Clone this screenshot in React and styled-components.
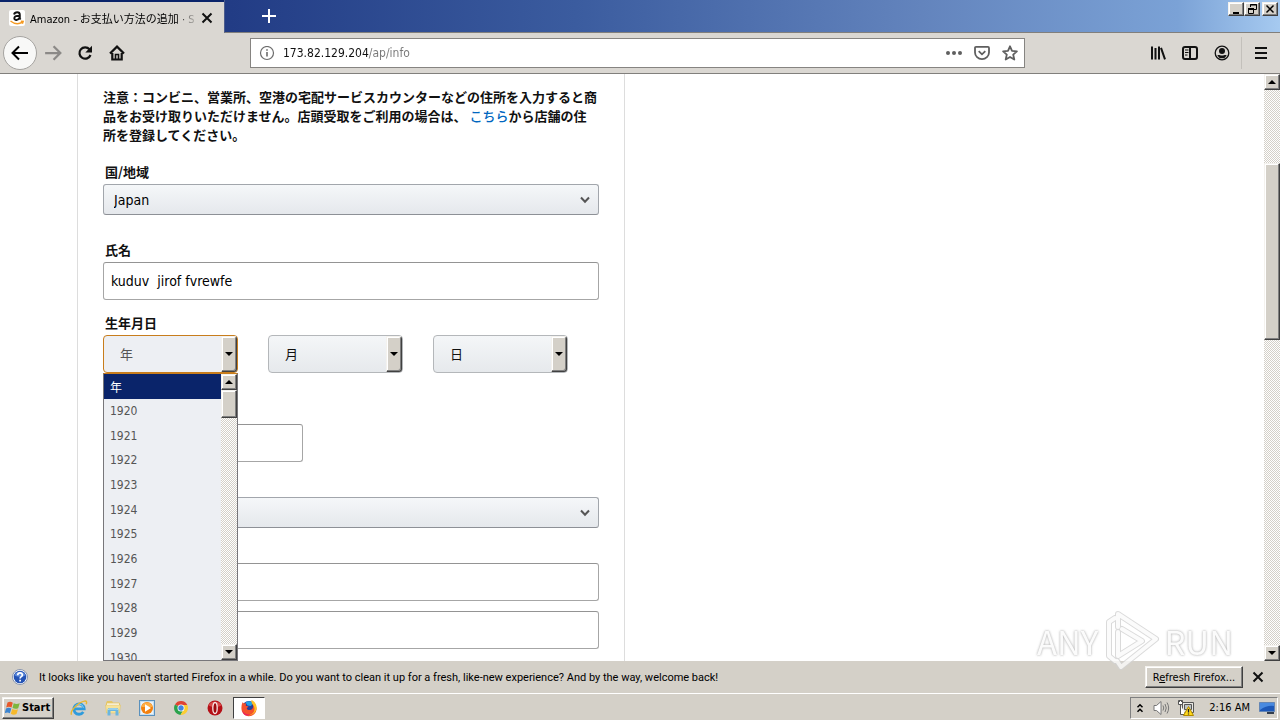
import React, { useState } from "react";
import styled, { createGlobalStyle, css } from "styled-components";

const years = ["年", ...Array.from({ length: 11 }, (_, i) => String(1920 + i))];

const App = () => {
    const [year, setYear] = useState("年");

    return (
        <Desktop>
            <GlobalStyle />
            <TitleBar>
                <Tab>
                    <AmazonIcon />
                    <TabTitle>Amazon - お支払い方法の追加 · Sign</TabTitle>
                    <IconButton $size={16} aria-label="Close tab"><CloseIcon /></IconButton>
                </Tab>
                <TabStrip>
                    <IconButton $size={28} $color="#fff" aria-label="New tab">
                        <Svg $size={16} strokeWidth="2"><path d="M8 1v14M1 8h14" /></Svg>
                    </IconButton>
                    <WindowControls>
                        <WindowButton aria-label="Minimize">
                            <Svg $size={12} viewBox="0 0 12 12" strokeWidth="2"><path d="M3 10h6" /></Svg>
                        </WindowButton>
                        <WindowButton aria-label="Restore">
                            <Svg $size={12} viewBox="0 0 12 12" strokeWidth="1">
                                <path d="M4.5 4V1.5h6v5H8M4 2h7M2.5 5.5h5v5h-5zM2 5.5h6M2 6.5h6" />
                            </Svg>
                        </WindowButton>
                        <WindowButton $apart aria-label="Close">
                            <Svg $size={12} viewBox="0 0 12 12" strokeWidth="1.5"><path d="M2.5 2.5l7 7M9.5 2.5l-7 7" /></Svg>
                        </WindowButton>
                    </WindowControls>
                </TabStrip>
            </TitleBar>

            <NavBar>
                <BackButton aria-label="Back">
                    <Svg $size={20} viewBox="0 0 20 20" strokeWidth="2"><path d="M18 10H3M9 3.500L2.500 10L9 16.500" /></Svg>
                </BackButton>
                <IconButton $size={32} $color="#8b8987" aria-label="Forward">
                    <Svg $size={18} strokeWidth="2"><path d="M1 8h13M8.500 2L14.500 8L8.500 14" /></Svg>
                </IconButton>
                <IconButton $size={32} aria-label="Reload">
                    <Svg $size={16} strokeWidth="2.2">
                        <path d="M12.500 4.300A5.700 5.700 0 1 0 13.500 10" />
                        <path d="M15 .8v6.700H8.300z" fill="currentColor" stroke="none" />
                    </Svg>
                </IconButton>
                <IconButton $size={32} aria-label="Home">
                    <Svg $size={16} strokeWidth="2.2">
                        <path d="M1 8.500L8 1.600l7 6.900M3.300 8v6.500h9.400V8" />
                        <path d="M6.500 14V9.500h3V14" strokeWidth="1.600" />
                    </Svg>
                </IconButton>
                <UrlBar>
                    <Svg $size={16} strokeWidth="1.2">
                        <circle cx="8" cy="8" r="6.500" /><path d="M8 7v4.500M8 4.200v1.500" strokeWidth="1.600" />
                    </Svg>
                    <UrlInput aria-label="Address" defaultValue="173.82.129.204/ap/info" />
                    <IconButton $size={28} $color="#5f5f5f" aria-label="Page actions">
                        <Svg $size={18} viewBox="0 0 18 18">
                            <g fill="currentColor" stroke="none"><circle cx="3" cy="9" r="2" /><circle cx="9" cy="9" r="2" /><circle cx="15" cy="9" r="2" /></g>
                        </Svg>
                    </IconButton>
                    <IconButton $size={28} $color="#5f5f5f" aria-label="Save to Pocket">
                        <Svg $size={16} strokeWidth="1.8">
                            <path d="M2 1.900h12a1 1 0 0 1 1 1V7.500a7 6.600 0 0 1-14 0V2.900a1 1 0 0 1 1-1zM4.700 6.200L8 9.300l3.300-3.100" />
                        </Svg>
                    </IconButton>
                    <IconButton $size={28} $color="#5f5f5f" aria-label="Bookmark">
                        <Svg $size={16} strokeWidth="1.8" strokeLinejoin="round">
                            <path d="M8 1.300l2 4.500 4.900.5-3.700 3.300 1.100 4.900L8 12l-4.300 2.500 1.100-4.900L1.100 6.300 6 5.800z" />
                        </Svg>
                    </IconButton>
                </UrlBar>
                <IconButton $size={32} aria-label="Library">
                    <Svg $size={16} strokeWidth="2"><path d="M2 1.500v13M5.500 3v11.500M9 1.500v13M11 2.800l4 11.500" /></Svg>
                </IconButton>
                <IconButton $size={32} aria-label="Sidebars">
                    <Svg $size={16} strokeWidth="2">
                        <rect x="1" y="2" width="14" height="12" rx="2" /><path d="M8 2v12" />
                        <path d="M3 5h3.500M3 7.500h3.500M3 10h2.500" strokeWidth="1" />
                    </Svg>
                </IconButton>
                <IconButton $size={32} aria-label="Account">
                    <Svg $size={16} strokeWidth="1.3">
                        <circle cx="8" cy="8" r="6.800" />
                        <g fill="currentColor" stroke="none"><circle cx="8" cy="6" r="3" /><path d="M3.300 10.500c1.500-1.200 2.500 0 4.700 0s3.200-1.200 4.700 0A5.200 5.200 0 0 1 8 13.300a5.200 5.200 0 0 1-4.700-2.800z" /></g>
                    </Svg>
                </IconButton>
                <NavDivider />
                <IconButton $size={32} aria-label="Menu">
                    <Svg $size={16} strokeWidth="2"><path d="M2 3h12M2 8h12M2 13h12" /></Svg>
                </IconButton>
            </NavBar>

            <Viewport>
                <Page>
                    <Panel>
                        <Note>
                            注意：コンビニ、営業所、空港の宅配サービスカウンターなどの住所を入力すると商品をお受け取りいただけません。店頭受取をご利用の場合は、 <a href="#store">こちら</a>から店舗の住所を登録してください。
                        </Note>
                        <Field $gap={18}>
                            <Label htmlFor="country">国/地域</Label>
                            <SelectBox>
                                <Select id="country"><option>Japan</option></Select>
                                <Chevron />
                            </SelectBox>
                        </Field>
                        <Field $gap={25}>
                            <Label htmlFor="name">氏名</Label>
                            <TextInput id="name" defaultValue="kuduv  jirof fvrewfe" />
                        </Field>
                        <Field $gap={13}>
                            <Label htmlFor="year">生年月日</Label>
                            <DateRow>
                                <DateBox>
                                    <DateSelect id="year" $open value={year} onChange={(e) => setYear(e.target.value)}>
                                        {years.map((y) => <option key={y}>{y}</option>)}
                                    </DateSelect>
                                    <DropMark><Arrow /></DropMark>
                                    <Popup>
                                        <YearList role="listbox" aria-label="年">
                                            {years.map((y) => (
                                                <YearItem key={y} role="option" aria-selected={y === year} $active={y === year} onClick={() => setYear(y)}>
                                                    {y}
                                                </YearItem>
                                            ))}
                                        </YearList>
                                        <ScrollBar before={0} thumb={28} />
                                    </Popup>
                                </DateBox>
                                <DateBox>
                                    <DateSelect aria-label="月"><option>月</option></DateSelect>
                                    <DropMark><Arrow /></DropMark>
                                </DateBox>
                                <DateBox>
                                    <DateSelect aria-label="日"><option>日</option></DateSelect>
                                    <DropMark><Arrow /></DropMark>
                                </DateBox>
                            </DateRow>
                        </Field>
                        <Field $gap={51}>
                            <TextInput aria-label="郵便番号" $short />
                        </Field>
                        <Field $gap={35}>
                            <SelectBox>
                                <Select aria-label="都道府県"><option></option></Select>
                                <Chevron />
                            </SelectBox>
                        </Field>
                        <Field $gap={35}>
                            <TextInput aria-label="住所 1" />
                        </Field>
                        <Field $gap={10}>
                            <TextInput aria-label="住所 2" />
                        </Field>
                    </Panel>
                </Page>
                <ScrollBar before={73} thumb={177} />
            </Viewport>

            <Notice>
                <HelpIcon />
                <NoticeText>
                    It looks like you haven't started Firefox in a while. Do you want to clean it up for a fresh, like-new experience? And by the way, welcome back!
                </NoticeText>
                <RefreshButton>R<u>e</u>fresh Firefox...</RefreshButton>
                <IconButton $size={30} aria-label="Dismiss"><CloseIcon /></IconButton>
                <Watermark>
                    <span>ANY</span>
                    <PlayLogo />
                    <span>RUN</span>
                </Watermark>
            </Notice>

            <TaskBar>
                <StartButton><WindowsIcon />Start</StartButton>
                <Launchers>
                    <TaskButton aria-label="Internet Explorer"><ExplorerIcon /></TaskButton>
                    <TaskButton aria-label="Files"><FolderIcon /></TaskButton>
                    <TaskButton aria-label="Media Player"><MediaIcon /></TaskButton>
                    <TaskButton aria-label="Chrome"><ChromeIcon /></TaskButton>
                    <TaskButton aria-label="Opera"><OperaIcon /></TaskButton>
                    <TaskButton $active aria-label="Firefox"><FirefoxIcon /></TaskButton>
                </Launchers>
                <Tray>
                    <Svg $size={10} viewBox="0 0 10 10" strokeWidth="1.5"><path d="M2.500 4.200L5 1.700l2.500 2.500M2.500 8.700L5 6.200l2.500 2.500" /></Svg>
                    <SpeakerIcon />
                    <NetworkIcon />
                    <Clock>2:16 AM</Clock>
                    <DesktopIcon />
                </Tray>
            </TaskBar>
        </Desktop>
    )
}

const ScrollBar = ({ before, thumb }) => (
    <ScrollTrack>
        <ScrollButton aria-label="Scroll up" tabIndex={-1}><Arrow $up /></ScrollButton>
        <ScrollBody $before={before}><ScrollThumb $length={thumb} /></ScrollBody>
        <ScrollButton aria-label="Scroll down" tabIndex={-1}><Arrow /></ScrollButton>
    </ScrollTrack>
)

const CloseIcon = () => (
    <Svg $size={14} viewBox="0 0 14 14" strokeWidth="2"><path d="M2.500 2.500l9 9M11.500 2.500l-9 9" /></Svg>
)

const Chevron = () => (
    <ChevronSvg viewBox="0 0 10 8"><path d="M1 1.500l4 4.200 4-4.200" /></ChevronSvg>
)

const AmazonIcon = () => (
    <Svg $size={16} stroke="none">
        <rect width="16" height="16" rx="2" fill="#fff" />
        <path d="M5 4.500C5.500 3 6.700 2.300 8.200 2.300 10 2.300 10.800 3.200 10.800 4.800v3.700l.8 1M10.600 5.800C7 5.800 5.300 6.500 5.300 8.200c0 2.400 4 2.400 5.300-.5" fill="none" stroke="#111" strokeWidth="1.900" />
        <path d="M1.500 11c4 3.200 8.500 3.300 12 1.200M11.800 11.200l2.400.2-.8 2.300" fill="none" stroke="#f59a22" strokeWidth="1.400" />
    </Svg>
)

const HelpIcon = () => (
    <Svg $size={16} stroke="none">
        <circle cx="8" cy="8" r="7.500" fill="#fff" stroke="#8794ae" />
        <circle cx="8" cy="8" r="6.300" fill="#2453b5" />
        <path d="M2.500 6.500a5.700 5.200 0 0 1 11 0Q8 9 2.500 6.500z" fill="#5e8bdc" />
        <path d="M5.700 6.200C5.800 3.200 10.400 3.300 10.400 6c0 1.700-2.300 1.600-2.300 3.400M8.100 10.700v1.800" fill="none" stroke="#fff" strokeWidth="1.700" />
    </Svg>
)

const PlayLogo = () => (
    <svg width="60" height="62" viewBox="0 0 60 62" fill="none" strokeLinejoin="round" strokeLinecap="round">
        <path d="M14 8L8 12v34l6 5M17 22v24l24-15-20-12M17 17V4l38 25-35 28-4-6" stroke="#d2d2d2" strokeWidth="6" />
        <path d="M14 8L8 12v34l6 5M17 22v24l24-15-20-12M17 17V4l38 25-35 28-4-6" stroke="#fbfbfb" strokeWidth="4" />
    </svg>
)

const WindowsIcon = () => (
    <Svg $size={16} stroke="none">
        <path d="M2.500 2.600C4.500 1.500 6 1.700 7.800 2.700L6.500 7.600C4.800 6.600 3.200 6.500 1.200 7.500z" fill="#e8582a" />
        <path d="M8.700 3.200c2 1 3.600 1 6 .1l-1.500 4.900c-2 .9-3.800.8-5.700-.2z" fill="#7db63c" />
        <path d="M1 8.400c2-1 3.600-.9 5.300.1L4.900 13.300C3.300 12.300 1.700 12.200-.3 13.200z" fill="#3b84d0" />
        <path d="M7.200 9c1.900 1 3.700 1.100 5.800.2l-1.500 4.900c-2 .8-3.900.8-5.700-.3z" fill="#f6b92b" />
    </Svg>
)

const ExplorerIcon = () => (
    <Svg $size={18} viewBox="0 0 18 18" stroke="none">
        <path d="M4.500 9.800h9.700A5.200 5.200 0 1 0 13.300 13" fill="none" stroke="#2f9bdc" strokeWidth="2.800" />
        <path d="M5 8.800a4.300 4.300 0 0 1 8.500 0" fill="none" stroke="#82cff5" strokeWidth="1" />
        <path d="M1.500 15.700C-.5 11.500 9 3 14.500 2.100c2.300-.3 2.500 1.200 1.600 3.200" fill="none" stroke="#e7b730" strokeWidth="1.400" />
    </Svg>
)

const FolderIcon = () => (
    <Svg $size={18} viewBox="0 0 18 18" stroke="none">
        <path d="M2 4l1-2h5l1 1.500h6l1 1V14H2z" fill="#e5c665" />
        <path d="M3 4.500h12V12H3z" fill="#fff" />
        <path d="M1.500 6h15L15.500 14h-13z" fill="#f7e39a" stroke="#dfc36b" strokeWidth=".6" />
        <path d="M3.500 16.500V11q0-2 2-2h7q2 0 2 2v5.500h-3V12h-5v4.500z" fill="#6ab5df" />
        <path d="M4.500 11q0-1 1-1h7q1 0 1 1" fill="none" stroke="#c2e7f7" />
    </Svg>
)

const MediaIcon = () => (
    <Svg $size={18} viewBox="0 0 18 18" stroke="none">
        <rect x="1.500" y="1.500" width="15" height="15" fill="#c5def0" stroke="#5a91bd" />
        <path d="M3 3h12v12H3z" fill="#e9f3fa" />
        <circle cx="9" cy="9" r="6" fill="#f2800e" />
        <path d="M3.500 8a5.600 5.600 0 0 1 11 0" fill="#ffad43" />
        <path d="M7 5.300v7.400l6-3.700z" fill="#fff" />
    </Svg>
)

const ChromeIcon = () => (
    <Svg $size={18} viewBox="0 0 18 18" stroke="none">
        <path d="M9 9L3 5.500A7 7 0 0 1 15.300 6H9z" fill="#df4434" />
        <path d="M9 9L3 5.500A7 7 0 0 0 8.500 16L11.600 10.500z" fill="#2ba24c" />
        <path d="M9 6h6.300A7 7 0 0 1 8.500 16l3.200-5.500z" fill="#fbcd32" />
        <circle cx="9" cy="9" r="3.500" fill="#fff" />
        <circle cx="9" cy="9" r="2.700" fill="#4285e0" />
    </Svg>
)

const OperaIcon = () => (
    <Svg $size={18} viewBox="0 0 18 18" stroke="none">
        <circle cx="9" cy="9" r="7.500" fill="#b51017" />
        <path d="M2.500 6.500a7 6 0 0 1 13 0Q9 10 2.500 6.500z" fill="#d94a49" />
        <ellipse cx="9" cy="9" rx="2.200" ry="5.500" fill="#9d090d" stroke="#f7e6e5" strokeWidth="1.300" />
    </Svg>
)

const FirefoxIcon = () => (
    <Svg $size={18} viewBox="0 0 18 18" stroke="none">
        <circle cx="9" cy="9" r="7" fill="#273e98" />
        <path d="M5.500 3.500A6 6 0 0 1 13 4l-2 3-3.500-.5z" fill="#22a3e8" />
        <path d="M2.500 3.200L4 4.600l2-.3-.2 2.500 2.700.8-1.800 1.600c.5 2.400 4 2.200 5.400.8 1.500-1.600 1.300-4.200-.4-6 3 .5 5 3.300 4.900 6.200A7.700 7.700 0 0 1 9 17.200C3 17.500-.5 11 2.500 3.200z" fill="#f4512c" />
        <path d="M11.500 1c3.200 1.500 5.500 4.600 5.100 8.300-.5 4.300-4.200 7-8 7 4-1 6-3.500 5.900-6.600-.1-3.600-3.800-4.700-3-8.700z" fill="#ffc326" />
        <path d="M2.500 11.500c1.300 3 4 4.300 7.500 4-3 2.500-7.300.5-7.500-4z" fill="#e91e63" />
    </Svg>
)

const SpeakerIcon = () => (
    <Svg $size={18} viewBox="0 0 18 18" stroke="#777" strokeWidth="1">
        <path d="M2 6.500h2.500L9 2.500v13l-4.500-4H2z" fill="#fff" />
        <path d="M11 6.500q1.500 2.500 0 5M13 5q2.500 4 0 8M15 3.500q3.300 5.500 0 11" />
    </Svg>
)

const NetworkIcon = () => (
    <Svg $size={18} viewBox="0 0 18 18" stroke="#555" strokeWidth="1">
        <path d="M5.500 3.500h11v10h-11z" fill="#e8e8e4" />
        <path d="M7.500 5.500h7v5h-7z" fill="#bdc3c6" />
        <path d="M1.500 1.500h4v4h-4zM3.500 5.500v10h5M2.500 1v2M4.500 1v2" fill="#fff" />
        <path d="M11.500 7.500l5 9h-10z" fill="#ffd91c" stroke="#b18a00" />
        <path d="M11.500 10v3.500M11.500 14.500v1" stroke="#222" strokeWidth="1.300" />
    </Svg>
)

const DesktopIcon = () => (
    <Svg $size={16} stroke="none">
        <path d="M.5 2.500h15v9H.5z" fill="#1d58b8" stroke="#6486b5" />
        <path d="M1 3h14v3Q8 5 1 10z" fill="#498ae0" />
        <path d="M8 12h7v2H8z" fill="#333d4c" />
    </Svg>
)

const GlobalStyle = createGlobalStyle`
    * { box-sizing: border-box; }
    body {
        margin: 0;
        font-family: "DejaVu Sans Condensed", "Noto Sans CJK JP", sans-serif;
        font-size: 11px;
        color: #000;
    }
    button, input, select { font: inherit; color: inherit; }
`;

const raised = css`
    background: #d4d0c8;
    border: 1px solid;
    border-color: #f4f2ee #404040 #404040 #f4f2ee;
    box-shadow: inset -1px -1px 0 #808080, inset 1px 1px 0 #fff;
`;

const Desktop = styled.div`
    height: 100vh;
    display: flex;
    flex-direction: column;
    overflow: hidden;
    background: #d4d0c8;
`;

const Svg = styled.svg.attrs((p) => ({
    viewBox: p.viewBox || "0 0 16 16",
    fill: "none",
    stroke: p.stroke || "currentColor",
    "aria-hidden": true,
}))`
    width: ${(p) => p.$size}px;
    height: ${(p) => p.$size}px;
    flex: none;
`;

const IconButton = styled.button`
    width: ${(p) => p.$size}px;
    height: ${(p) => p.$size}px;
    flex: none;
    display: flex;
    align-items: center;
    justify-content: center;
    padding: 0;
    border: 0;
    background: none;
    color: ${(p) => p.$color || "#111"};
`;

const TitleBar = styled.header`
    display: flex;
    height: 33px;
    flex: none;
    background: linear-gradient(90deg, #0a246a 0%, #223c85 18%, #3b5c9f 45%, #6384bd 72%, #7ba2d6 92%, #a6caf0 100%);
`;

const Tab = styled.div`
    width: 224px;
    display: flex;
    align-items: center;
    gap: 5px;
    padding: 0 9px;
    border-top: 2px solid #0a246a;
    background: #dad7d2;
`;

const TabTitle = styled.span`
    flex: 1;
    overflow: hidden;
    white-space: nowrap;
    mask-image: linear-gradient(90deg, #000 147px, transparent 168px);
`;

const TabStrip = styled.div`
    flex: 1;
    display: flex;
    justify-content: space-between;
    padding: 2px 2px 0 30px;
    border-left: 1px solid #4c5c8c;
    border-bottom: 1px solid #817f7c;
`;

const WindowControls = styled.div`
    display: flex;
`;

const WindowButton = styled.button`
    ${raised}
    width: 16px;
    height: 14px;
    display: flex;
    align-items: center;
    justify-content: center;
    padding: 0;
    margin-left: ${(p) => (p.$apart ? 2 : 0)}px;
`;

const NavBar = styled.nav`
    display: flex;
    align-items: center;
    height: 41px;
    flex: none;
    padding: 0 3px;
    border-bottom: 1px solid #817f7c;
    background: #dad7d2;
`;

const BackButton = styled.button`
    width: 34px;
    height: 34px;
    display: flex;
    align-items: center;
    justify-content: center;
    padding: 0;
    border: 1px solid #a5a3a0;
    border-radius: 50%;
    background: #f8f8f7;
`;

const UrlBar = styled.div`
    flex: 1;
    display: flex;
    align-items: center;
    height: 30px;
    margin: 0 117px;
    padding: 0 0 0 8px;
    border: 1px solid #868481;
    background: #fff;
    color: #6c6c6c;
`;

/* host part is dark, path part is grey */
const UrlInput = styled.input`
    flex: 1;
    min-width: 0;
    padding: 0 0 0 8px;
    border: 0;
    outline: 0;
    font-size: 12px;
    color: transparent;
    caret-color: #000;
    background: linear-gradient(90deg, #111 94px, #777 94px);
    background-clip: text;
`;

const NavDivider = styled.div`
    width: 1px;
    height: 32px;
    margin: 0 3px;
    background: #c3c0bb;
`;

const Viewport = styled.main`
    flex: 1;
    min-height: 0;
    display: flex;
    overflow: hidden;
    background: #fff;
`;

const Page = styled.div`
    flex: 1;
    padding-left: 77px;
    font-size: 13px;
`;

const Panel = styled.form`
    max-width: 548px;
    min-height: 600px;
    padding: 13px 25px;
    border: solid #ddd;
    border-width: 0 1px;
`;

const Note = styled.p`
    margin: 0;
    font-family: "Noto Sans CJK JP", sans-serif;
    font-weight: 700;
    line-height: 19px;
    color: #111;
    a {
        color: #0066c0;
        font-weight: 500;
        text-decoration: none;
    }
`;

const Field = styled.div`
    margin-top: ${(p) => p.$gap}px;
`;

const Label = styled.label`
    display: block;
    padding-left: 2px;
    margin-bottom: 3px;
    font-family: "Noto Sans CJK JP", sans-serif;
    font-weight: 700;
    line-height: 19px;
    color: #111;
`;

const TextInput = styled.input`
    display: block;
    width: ${(p) => (p.$short ? "200px" : "100%")};
    height: 38px;
    padding: 0 7px;
    border: 1px solid #a6a6a6;
    border-top-color: #949494;
    border-radius: 3px;
    background: #fff;
    font-size: 14px;
`;

const SelectBox = styled.div`
    position: relative;
`;

const Select = styled.select`
    appearance: none;
    display: block;
    width: 100%;
    height: 31px;
    padding: 0 10px;
    border: 1px solid #a2a6ac;
    border-bottom-color: #8d9096;
    border-radius: 3px;
    background: linear-gradient(#f5f7f9, #e5e8ec);
    font-size: 14px;
`;

const ChevronSvg = styled.svg`
    position: absolute;
    right: 9px;
    top: 12px;
    width: 10px;
    height: 8px;
    fill: none;
    stroke: #555;
    stroke-width: 2;
    pointer-events: none;
`;

const DateRow = styled.div`
    display: flex;
    gap: 30px;
`;

const DateBox = styled.div`
    position: relative;
    width: 135px;
`;

const DateSelect = styled.select`
    appearance: none;
    display: block;
    width: 100%;
    height: 38px;
    padding: 0 16px;
    border: 1px solid ${(p) => (p.$open ? "#c87d1c" : "#b4b7ba")};
    border-radius: 4px;
    background: ${(p) => (p.$open ? "#edeff3" : "linear-gradient(#f4f6f8, #e6e9ec)")};
    color: ${(p) => (p.$open ? "#555" : "#111")};
    font-size: 13px;
`;

const DropMark = styled.span`
    ${raised}
    position: absolute;
    top: 1px;
    right: 1px;
    width: 16px;
    height: 36px;
    display: flex;
    align-items: center;
    justify-content: center;
    border-radius: 0 3px 3px 0;
    pointer-events: none;
`;

const Arrow = styled.i`
    border: 4px solid transparent;
    border-width: ${(p) => (p.$up ? "0 4px 4px" : "4px 4px 0")};
    border-${(p) => (p.$up ? "bottom" : "top")}-color: #000;
`;

const Popup = styled.div`
    position: absolute;
    z-index: 2;
    top: 38px;
    left: 0;
    width: 135px;
    height: 288px;
    display: flex;
    overflow: hidden;
    border: 1px solid #77767a;
    border-top-color: #c87d1c;
    background: #edeff3;
`;

const YearList = styled.div`
    flex: 1;
    height: 296px;
    display: flex;
    flex-direction: column;
`;

const YearItem = styled.div`
    flex: 1;
    display: flex;
    align-items: center;
    padding-left: 6px;
    font-size: 12px;
    color: ${(p) => (p.$active ? "#fff" : "#555")};
    background: ${(p) => (p.$active ? "#0a246a" : "transparent")};
`;

const ScrollTrack = styled.div`
    width: 16px;
    flex: none;
    display: flex;
    flex-direction: column;
    background: repeating-conic-gradient(#fff 0 25%, #d4d0c8 0 50%) 0 0 / 2px 2px;
`;

const ScrollButton = styled.button`
    ${raised}
    height: 16px;
    flex: none;
    display: flex;
    align-items: center;
    justify-content: center;
    padding: 0;
`;

const ScrollBody = styled.div`
    flex: 1;
    padding-top: ${(p) => p.$before}px;
`;

const ScrollThumb = styled.div`
    ${raised}
    height: ${(p) => p.$length}px;
`;

const Notice = styled.aside`
    position: relative;
    display: flex;
    align-items: center;
    height: 32px;
    flex: none;
    padding: 0 7px 0 12px;
`;

const NoticeText = styled.span`
    flex: 1;
    padding-left: 11px;
    font-family: Roboto, sans-serif;
    white-space: nowrap;
`;

const RefreshButton = styled.button`
    ${raised}
    width: 98px;
    height: 22px;
    padding: 0;
    white-space: nowrap;
`;

const Watermark = styled.div`
    position: absolute;
    right: 47px;
    bottom: 21px;
    display: flex;
    align-items: center;
    gap: 3px;
    font-family: "Noto Sans CJK JP", sans-serif;
    font-size: 33px;
    line-height: 40px;
    color: #fbfbfb;
    text-shadow: 0 0 2px #aaa, 0 0 3px #bbb;
    opacity: 0.8;
    pointer-events: none;
`;

const TaskBar = styled.footer`
    display: flex;
    align-items: center;
    height: 27px;
    flex: none;
    padding: 1px 2px 0;
    border-top: 1px solid #fff;
`;

const StartButton = styled.button`
    ${raised}
    display: flex;
    align-items: center;
    gap: 1px;
    width: 52px;
    height: 22px;
    padding: 0 2px;
    font-weight: 700;
`;

const Launchers = styled.div`
    flex: 1;
    display: flex;
    gap: 2px;
    padding-left: 9px;
`;

const TaskButton = styled.button`
    width: 32px;
    height: 22px;
    display: flex;
    align-items: center;
    justify-content: center;
    padding: 0;
    border: ${(p) => (p.$active ? "1px solid" : "0")};
    border-color: #404040 #fff #fff #404040;
    background: ${(p) => (p.$active ? "#fff" : "none")};
`;

const Tray = styled.div`
    display: flex;
    align-items: center;
    height: 22px;
    padding: 0 2px 0 4px;
    border: 1px solid;
    border-color: #808080 #fff #fff #808080;
    gap: 7px;
`;

const Clock = styled.time`
    padding: 0 2px 0 7px;
    white-space: nowrap;
`;

export default App
